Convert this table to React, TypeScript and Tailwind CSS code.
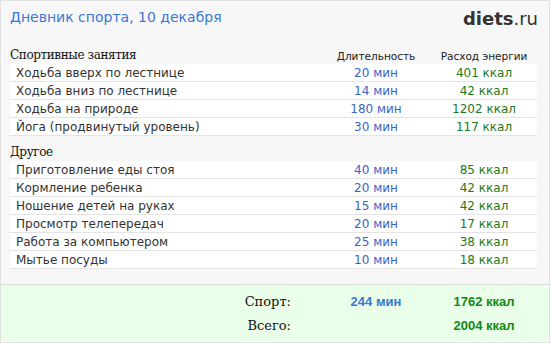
const sport = [
  { name: 'Ходьба вверх по лестнице', min: 20, kcal: 401 },
  { name: 'Ходьба вниз по лестнице', min: 14, kcal: 42 },
  { name: 'Ходьба на природе', min: 180, kcal: 1202 },
  { name: 'Йога (продвинутый уровень)', min: 30, kcal: 117 },
]

const other = [
  { name: 'Приготовление еды стоя', min: 40, kcal: 85 },
  { name: 'Кормление ребенка', min: 20, kcal: 42 },
  { name: 'Ношение детей на руках', min: 15, kcal: 42 },
  { name: 'Просмотр телепередач', min: 20, kcal: 17 },
  { name: 'Работа за компьютером', min: 25, kcal: 38 },
  { name: 'Мытье посуды', min: 10, kcal: 18 },
]

type Item = { name: string; min: number; kcal: number }

function Row({ item }: { item: Item }) {
  return (
    <div className="flex h-[18px] items-center bg-white border-b border-[#e4e4e4] text-[12px] font-['DejaVu_Sans',sans-serif]">
      <span className="flex-1 pl-[6px] text-[#333]">{item.name}</span>
      <span className="w-[110px] text-center text-[#3a64c4]">{item.min} мин</span>
      <span className="w-[106px] text-center text-[#1c7a1c]">{item.kcal} ккал</span>
    </div>
  )
}

function Section({ title, items, head }: { title: string; items: Item[]; head?: boolean }) {
  return (
    <div>
      <div className="flex h-[20px] items-end pb-[3px]">
        <span className="flex-1 font-['DejaVu_Serif',serif] text-[12px] tracking-[-0.4px] text-[#111] leading-none">{title}</span>
        {head && (
          <>
            <span className="w-[110px] text-center text-[10.5px] text-[#222] font-['DejaVu_Sans',sans-serif] leading-none">Длительность</span>
            <span className="w-[106px] text-center text-[10.5px] text-[#222] font-['DejaVu_Sans',sans-serif] leading-none">Расход энергии</span>
          </>
        )}
      </div>
      {items.map((it) => (
        <Row key={it.name} item={it} />
      ))}
    </div>
  )
}

export default function App() {
  return (
    <div className="w-[550px] h-[343px] bg-[#f7f7f7] border border-[#e2e2e2] flex flex-col">
      <div className="flex items-start justify-between px-[9px] pt-[6px] h-[43px]">
        <h1 className="font-['DejaVu_Sans',sans-serif] text-[14px] leading-[20px] text-[#3a78d6]">Дневник спорта, 10 декабря</h1>
        <div className="font-['DejaVu_Sans',sans-serif] text-[18px] text-[#333] leading-none pt-[3px] pr-[2px]">
          <span className="font-bold">diets</span>.ru
        </div>
      </div>
      <div className="pl-[9px] pr-[12px] flex flex-col gap-[5px]">
        <Section title="Спортивные занятия" items={sport} head />
        <Section title="Другое" items={other} />
      </div>
      <div className="mt-auto h-[58px] bg-[#eaffea] border-t border-[#dcdcdc] flex flex-col justify-center gap-[5px] pr-[12px]">
        <div className="flex items-center">
          <span className="flex-1 text-right pr-[30px] font-['DejaVu_Serif',serif] text-[13px] text-[#111]">Спорт:</span>
          <span className="w-[110px] text-center font-['Liberation_Sans',sans-serif] font-bold text-[13px] text-[#3a78d6]">244 мин</span>
          <span className="w-[106px] text-center font-['Liberation_Sans',sans-serif] font-bold text-[13px] text-[#118811]">1762 ккал</span>
        </div>
        <div className="flex items-center">
          <span className="flex-1 text-right pr-[30px] font-['DejaVu_Serif',serif] text-[13px] text-[#111]">Всего:</span>
          <span className="w-[110px]" />
          <span className="w-[106px] text-center font-['Liberation_Sans',sans-serif] font-bold text-[13px] text-[#118811]">2004 ккал</span>
        </div>
      </div>
    </div>
  )
}
